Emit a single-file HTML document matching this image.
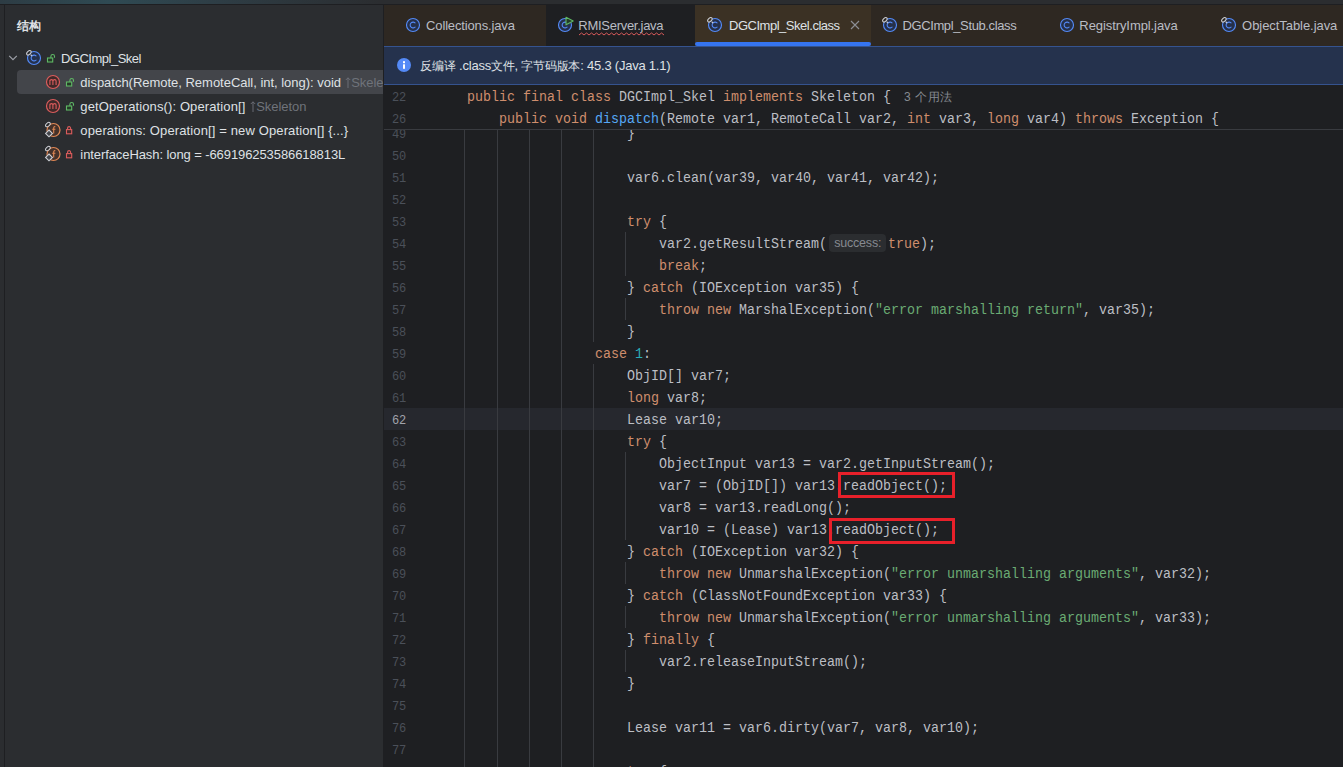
<!DOCTYPE html><html><head><meta charset="utf-8"><style>

*{margin:0;padding:0;box-sizing:border-box}
html,body{width:1343px;height:767px;overflow:hidden;background:#1e1f22}
body{position:relative;font-family:"Liberation Sans",sans-serif;}
.a{position:absolute}
.code{position:absolute;font-family:"Liberation Mono",monospace;font-size:13.3333px;white-space:pre;color:#bcbec4;line-height:22px;height:22px;transform:scaleY(1.15);transform-origin:0 14.56px}
.k{color:#cf8e6d} .s{color:#6aab73} .n{color:#2aacb8} .f{color:#56a8f5}
.ln{position:absolute;font-family:"Liberation Mono",monospace;font-size:12px;color:#4b5059;line-height:22px;height:22px;width:40px;text-align:right;left:366.3px;transform:scaleY(1.14);transform-origin:0 14.2px}
.g{position:absolute;width:1px;background:#393b40}
.ui{position:absolute;font-size:13px;color:#dfe1e5;white-space:nowrap;line-height:16px}
.gray{color:#6f737a}

</style></head><body>
<div class="a" style="left:0;top:0;width:1343px;height:4px;background:linear-gradient(to right,#2d3c44 0px,#2f4a53 110px,#2e3d45 220px,#2b2d30 380px,#2b2d30 1343px)"></div>
<div class="a" style="left:0;top:4px;width:1343px;height:1px;background:#1e1f22"></div>
<div class="a" style="left:0;top:5px;width:383px;height:762px;background:#2b2d30"></div>
<div class="a" style="left:4px;top:5px;width:1px;height:762px;background:#1e1f22"></div>
<div class="ui" id="title" style="left:17.20px;top:17.84px;letter-spacing:0.000px;font-size:12px;font-weight:bold;">结构</div>
<svg class="a" style="left:8px;top:54px" width="10" height="8" viewBox="0 0 10 8"><path d="M1.2 1.8 L5 5.6 L8.8 1.8" fill="none" stroke="#9da0a8" stroke-width="1.2"/></svg>
<svg class="a" style="left:25px;top:49px" width="18" height="18" viewBox="0 0 18 18"><circle cx="9" cy="9" r="6.5" fill="#25324d" stroke="#548af7" stroke-width="1.15"/><path d="M11.4 7.3 A2.9 2.9 0 1 0 11.4 10.7" fill="none" stroke="#548af7" stroke-width="1.1"/><ellipse cx="3.9" cy="3.8" rx="2.7" ry="1.6" transform="rotate(-45 3.9 3.8)" fill="#2b2d30" stroke="#ced0d6" stroke-width="1"/><path d="M5.6 5.6 L7.2 7.2" stroke="#ced0d6" stroke-width="1.1"/></svg>
<svg class="a" style="left:46px;top:53px" width="10" height="10" viewBox="0 0 10 10"><rect x="1.5" y="5" width="5.2" height="4" fill="#253a27" stroke="#5fb865" stroke-width="1.1"/><path d="M4.9 5 V3.3 A1.8 1.8 0 0 1 8.5 3.3 V4.8" fill="none" stroke="#5fb865" stroke-width="1.1"/></svg>
<div class="ui" id="t_cls" style="left:60.93px;top:50.50px;letter-spacing:-0.491px;font-size:13px;">DGCImpl_Skel</div>
<div class="a" style="left:17px;top:70px;width:366px;height:24px;background:#43454a;border-radius:4px 0 0 4px"></div>
<div class="a" style="left:0;top:0;width:383px;height:767px;overflow:hidden">
<svg class="a" style="left:44px;top:73px" width="18" height="18" viewBox="0 0 18 18"><circle cx="9" cy="9" r="6.5" fill="#402929" stroke="#db5c5c" stroke-width="1.2"/><path d="M5.9 12 V6.7 M5.9 8 Q6.2 6.6 7.5 6.6 Q8.9 6.6 8.9 8 V12 M8.9 8 Q9.3 6.6 10.6 6.6 Q12.1 6.6 12.1 8 V12" fill="none" stroke="#db5c5c" stroke-width="1.1"/></svg>
<svg class="a" style="left:65px;top:77px" width="10" height="10" viewBox="0 0 10 10"><rect x="1.5" y="5" width="5.2" height="4" fill="#253a27" stroke="#5fb865" stroke-width="1.1"/><path d="M4.9 5 V3.3 A1.8 1.8 0 0 1 8.5 3.3 V4.8" fill="none" stroke="#5fb865" stroke-width="1.1"/></svg>
<div class="ui" id="t_r1" style="left:80.35px;top:74.50px;letter-spacing:-0.020px;font-size:13px;">dispatch(Remote, RemoteCall, int, long): void</div>
<svg class="a" style="left:345px;top:77px" width="6" height="11" viewBox="0 0 6 11"><path d="M3 11 V0.8 M0.8 3 L3 0.8 L5.2 3" fill="none" stroke="#6f737a" stroke-width="0.9"/></svg>
<div class="ui" id="t_r1s" style="left:351.23px;top:74.50px;letter-spacing:-0.039px;font-size:13px;color:#6f737a;">Skeleton</div>
<svg class="a" style="left:44px;top:97px" width="18" height="18" viewBox="0 0 18 18"><circle cx="9" cy="9" r="6.5" fill="#402929" stroke="#db5c5c" stroke-width="1.2"/><path d="M5.9 12 V6.7 M5.9 8 Q6.2 6.6 7.5 6.6 Q8.9 6.6 8.9 8 V12 M8.9 8 Q9.3 6.6 10.6 6.6 Q12.1 6.6 12.1 8 V12" fill="none" stroke="#db5c5c" stroke-width="1.1"/></svg>
<svg class="a" style="left:65px;top:101px" width="10" height="10" viewBox="0 0 10 10"><rect x="1.5" y="5" width="5.2" height="4" fill="#253a27" stroke="#5fb865" stroke-width="1.1"/><path d="M4.9 5 V3.3 A1.8 1.8 0 0 1 8.5 3.3 V4.8" fill="none" stroke="#5fb865" stroke-width="1.1"/></svg>
<div class="ui" id="t_r2" style="left:80.35px;top:98.50px;letter-spacing:0.117px;font-size:13px;">getOperations(): Operation[]</div>
<svg class="a" style="left:250px;top:101px" width="6" height="11" viewBox="0 0 6 11"><path d="M3 11 V0.8 M0.8 3 L3 0.8 L5.2 3" fill="none" stroke="#6f737a" stroke-width="0.9"/></svg>
<div class="ui" id="t_r2s" style="left:256.23px;top:98.50px;letter-spacing:-0.039px;font-size:13px;color:#6f737a;">Skeleton</div>
<svg class="a" style="left:44px;top:121px" width="18" height="18" viewBox="0 0 18 18"><circle cx="9.5" cy="9" r="6.5" fill="#45322a" stroke="#e08855" stroke-width="1.2"/><path d="M11.3 5.7 Q9.7 5.3 9.7 7 V12.6 M8.2 8.3 H11.4" fill="none" stroke="#e08855" stroke-width="1.1"/><ellipse cx="3.9" cy="3.6" rx="2.7" ry="1.6" transform="rotate(-40 3.9 3.6)" fill="#2b2d30" stroke="#ced0d6" stroke-width="1"/><path d="M5 9 L8.4 12.4 L5 15.8 L1.6 12.4 Z" fill="#43454a" stroke="#ced0d6" stroke-width="1.1"/></svg>
<svg class="a" style="left:65px;top:125px" width="10" height="10" viewBox="0 0 10 10"><rect x="1.5" y="4.6" width="5.2" height="4.2" fill="#3d2a2a" stroke="#db5c5c" stroke-width="1.1"/><path d="M2.6 4.6 V3.1 A1.5 1.5 0 0 1 5.6 3.1 V4.6" fill="none" stroke="#db5c5c" stroke-width="1.1"/></svg>
<div class="ui" id="t_r3" style="left:80.35px;top:122.50px;letter-spacing:0.127px;font-size:13px;">operations: Operation[] = new Operation[] {...}</div>
<svg class="a" style="left:44px;top:145px" width="18" height="18" viewBox="0 0 18 18"><circle cx="9.5" cy="9" r="6.5" fill="#45322a" stroke="#e08855" stroke-width="1.2"/><path d="M11.3 5.7 Q9.7 5.3 9.7 7 V12.6 M8.2 8.3 H11.4" fill="none" stroke="#e08855" stroke-width="1.1"/><ellipse cx="3.9" cy="3.6" rx="2.7" ry="1.6" transform="rotate(-40 3.9 3.6)" fill="#2b2d30" stroke="#ced0d6" stroke-width="1"/><path d="M5 9 L8.4 12.4 L5 15.8 L1.6 12.4 Z" fill="#43454a" stroke="#ced0d6" stroke-width="1.1"/></svg>
<svg class="a" style="left:65px;top:149px" width="10" height="10" viewBox="0 0 10 10"><rect x="1.5" y="4.6" width="5.2" height="4.2" fill="#3d2a2a" stroke="#db5c5c" stroke-width="1.1"/><path d="M2.6 4.6 V3.1 A1.5 1.5 0 0 1 5.6 3.1 V4.6" fill="none" stroke="#db5c5c" stroke-width="1.1"/></svg>
<div class="ui" id="t_r4" style="left:80.35px;top:146.50px;letter-spacing:-0.088px;font-size:13px;">interfaceHash: long = -669196253586618813L</div>
</div>
<div class="a" style="left:383px;top:5px;width:1px;height:762px;background:#1e1f22"></div>
<div class="a" style="left:384px;top:5px;width:162px;height:41px;background:#2e2822"></div>
<div class="a" style="left:546px;top:5px;width:149px;height:41px;background:#1e1f22"></div>
<div class="a" style="left:695px;top:5px;width:176px;height:41px;background:#3b3124"></div>
<div class="a" style="left:871px;top:5px;width:175px;height:41px;background:#2e2822"></div>
<div class="a" style="left:1046px;top:5px;width:162px;height:41px;background:#2e2822"></div>
<div class="a" style="left:1208px;top:5px;width:135px;height:41px;background:#2e2822"></div>
<svg class="a" style="left:404px;top:16px" width="18" height="18" viewBox="0 0 18 18"><circle cx="9" cy="9" r="6.5" fill="#25304a" stroke="#548af7" stroke-width="1.15"/><path d="M11.4 7.3 A2.9 2.9 0 1 0 11.4 10.7" fill="none" stroke="#548af7" stroke-width="1.1"/></svg>
<div class="ui" id="tab1" style="left:426.09px;top:17.50px;letter-spacing:-0.150px;font-size:13px;color:#babdc4;">Collections.java</div>
<svg class="a" style="left:556px;top:16px" width="18" height="18" viewBox="0 0 18 18"><circle cx="9" cy="9" r="6.5" fill="#25304a" stroke="#548af7" stroke-width="1.15"/><path d="M11.4 7.3 A2.9 2.9 0 1 0 11.4 10.7" fill="none" stroke="#548af7" stroke-width="1.1"/></svg>
<div class="ui" id="tab2" style="left:578.30px;top:17.50px;letter-spacing:-0.277px;font-size:13px;color:#babdc4;">RMIServer.java</div>
<svg class="a" style="left:564px;top:15px" width="12" height="12" viewBox="0 0 12 12"><path d="M2 2.2 L9.2 6 L2 9.8 Z" fill="#253a27" stroke="#5fb865" stroke-width="1.1" stroke-linejoin="round"/></svg>
<svg class="a" style="left:0;top:0" width="700" height="40"><polyline points="579.0,35 581.5,33 584.0,35 586.5,33 589.0,35 591.5,33 594.0,35 596.5,33 599.0,35 601.5,33 604.0,35 606.5,33 609.0,35 611.5,33 614.0,35 616.5,33 619.0,35 621.5,33 624.0,35 626.5,33 629.0,35 631.5,33 634.0,35 636.5,33 639.0,35 641.5,33 644.0,35 646.5,33 649.0,35 651.5,33 654.0,35 656.5,33 659.0,35 661.5,33 664.0,35" fill="none" stroke="#d95a5a" stroke-width="1"/></svg>
<svg class="a" style="left:706px;top:16px" width="18" height="18" viewBox="0 0 18 18"><circle cx="9" cy="9" r="6.5" fill="#25304a" stroke="#548af7" stroke-width="1.15"/><path d="M11.4 7.3 A2.9 2.9 0 1 0 11.4 10.7" fill="none" stroke="#548af7" stroke-width="1.1"/><ellipse cx="3.9" cy="3.8" rx="2.7" ry="1.6" transform="rotate(-45 3.9 3.8)" fill="#3b3124" stroke="#ced0d6" stroke-width="1"/><path d="M5.6 5.6 L7.2 7.2" stroke="#ced0d6" stroke-width="1.1"/></svg>
<div class="ui" id="tab3" style="left:729.00px;top:17.50px;letter-spacing:-0.476px;font-size:13px;color:#dfe1e5;">DGCImpl_Skel.class</div>
<div class="a" style="left:695px;top:42px;width:176px;height:4px;background:#3574f0;border-radius:2px"></div>
<svg class="a" style="left:849px;top:19px" width="12" height="12" viewBox="0 0 12 12"><path d="M2 2 L10 10 M10 2 L2 10" stroke="#8c8f96" stroke-width="1.1"/></svg>
<svg class="a" style="left:880.5px;top:16px" width="18" height="18" viewBox="0 0 18 18"><circle cx="9" cy="9" r="6.5" fill="#25304a" stroke="#548af7" stroke-width="1.15"/><path d="M11.4 7.3 A2.9 2.9 0 1 0 11.4 10.7" fill="none" stroke="#548af7" stroke-width="1.1"/><ellipse cx="3.9" cy="3.8" rx="2.7" ry="1.6" transform="rotate(-45 3.9 3.8)" fill="#2e2822" stroke="#ced0d6" stroke-width="1"/><path d="M5.6 5.6 L7.2 7.2" stroke="#ced0d6" stroke-width="1.1"/></svg>
<div class="ui" id="tab4" style="left:902.39px;top:17.50px;letter-spacing:-0.371px;font-size:13px;color:#babdc4;">DGCImpl_Stub.class</div>
<svg class="a" style="left:1058px;top:16px" width="18" height="18" viewBox="0 0 18 18"><circle cx="9" cy="9" r="6.5" fill="#25304a" stroke="#548af7" stroke-width="1.15"/><path d="M11.4 7.3 A2.9 2.9 0 1 0 11.4 10.7" fill="none" stroke="#548af7" stroke-width="1.1"/></svg>
<div class="ui" id="tab5" style="left:1079.36px;top:17.50px;letter-spacing:-0.084px;font-size:13px;color:#babdc4;">RegistryImpl.java</div>
<svg class="a" style="left:1220px;top:16px" width="18" height="18" viewBox="0 0 18 18"><circle cx="9" cy="9" r="6.5" fill="#25304a" stroke="#548af7" stroke-width="1.15"/><path d="M11.4 7.3 A2.9 2.9 0 1 0 11.4 10.7" fill="none" stroke="#548af7" stroke-width="1.1"/><ellipse cx="3.9" cy="3.8" rx="2.7" ry="1.6" transform="rotate(-45 3.9 3.8)" fill="#2e2822" stroke="#ced0d6" stroke-width="1"/><path d="M5.6 5.6 L7.2 7.2" stroke="#ced0d6" stroke-width="1.1"/></svg>
<div class="ui" id="tab6" style="left:1242.12px;top:17.50px;letter-spacing:-0.060px;font-size:13px;color:#babdc4;">ObjectTable.java</div>
<div class="a" style="left:384px;top:46px;width:959px;height:39px;background:#25324d;border-top:1px solid #35538f;border-bottom:1px solid #35538f"></div>
<svg class="a" style="left:396px;top:57px" width="16" height="16" viewBox="0 0 16 16"><circle cx="8" cy="8" r="7" fill="#548af7"/><rect x="7" y="7.3" width="2" height="4.5" fill="#ffffff"/><rect x="7" y="4.2" width="2" height="2" fill="#ffffff"/></svg>
<div class="ui" id="banner" style="left:420.42px;top:57.50px;letter-spacing:-0.226px;font-size:13px;"><span style="font-size:12.2px">反编译</span> .class<span style="font-size:12.2px">文件</span>, <span style="font-size:12.2px">字节码版本</span>: 45.3 (Java 1.1)</div>
<div class="a" style="left:384px;top:408px;width:959px;height:22px;background:#26282e"></div>
<div class="g" style="left:464px;top:130px;height:637px"></div>
<div class="g" style="left:497px;top:130px;height:637px"></div>
<div class="g" style="left:529px;top:130px;height:637px"></div>
<div class="g" style="left:561px;top:130px;height:637px"></div>
<div class="g" style="left:593px;top:130px;height:212px"></div>
<div class="g" style="left:593px;top:364px;height:403px"></div>
<div class="g" style="left:625px;top:232px;height:44px"></div>
<div class="g" style="left:625px;top:298px;height:22px"></div>
<div class="g" style="left:625px;top:452px;height:88px"></div>
<div class="g" style="left:625px;top:562px;height:22px"></div>
<div class="g" style="left:625px;top:606px;height:22px"></div>
<div class="g" style="left:625px;top:650px;height:22px"></div>
<div class="ln" style="top:123.8px;color:#4b5059">49</div>
<div class="code" style="left:627.0px;top:123.5px">}</div>
<div class="ln" style="top:145.8px;color:#4b5059">50</div>
<div class="ln" style="top:167.8px;color:#4b5059">51</div>
<div class="code" style="left:627.0px;top:167.5px">var6.clean(var39, var40, var41, var42);</div>
<div class="ln" style="top:189.8px;color:#4b5059">52</div>
<div class="ln" style="top:211.8px;color:#4b5059">53</div>
<div class="code" style="left:627.0px;top:211.5px"><span class="k">try</span> {</div>
<div class="ln" style="top:233.8px;color:#4b5059">54</div>
<div class="code" style="left:659.0px;top:233.5px">var2.getResultStream(</div>
<div class="code" style="left:888.0px;top:233.5px"><span class="k">true</span>);</div>
<div class="ln" style="top:255.8px;color:#4b5059">55</div>
<div class="code" style="left:659.0px;top:255.5px"><span class="k">break</span>;</div>
<div class="ln" style="top:277.8px;color:#4b5059">56</div>
<div class="code" style="left:627.0px;top:277.5px">} <span class="k">catch</span> (IOException var35) {</div>
<div class="ln" style="top:299.8px;color:#4b5059">57</div>
<div class="code" style="left:659.0px;top:299.5px"><span class="k">throw</span> <span class="k">new</span> MarshalException(<span class="s">&quot;error marshalling return&quot;</span>, var35);</div>
<div class="ln" style="top:321.8px;color:#4b5059">58</div>
<div class="code" style="left:627.0px;top:321.5px">}</div>
<div class="ln" style="top:343.8px;color:#4b5059">59</div>
<div class="code" style="left:595.0px;top:343.5px"><span class="k">case</span> <span class="n">1</span>:</div>
<div class="ln" style="top:365.8px;color:#4b5059">60</div>
<div class="code" style="left:627.0px;top:365.5px">ObjID[] var7;</div>
<div class="ln" style="top:387.8px;color:#4b5059">61</div>
<div class="code" style="left:627.0px;top:387.5px"><span class="k">long</span> var8;</div>
<div class="ln" style="top:409.8px;color:#a1a3ab">62</div>
<div class="code" style="left:627.0px;top:409.5px">Lease var10;</div>
<div class="ln" style="top:431.8px;color:#4b5059">63</div>
<div class="code" style="left:627.0px;top:431.5px"><span class="k">try</span> {</div>
<div class="ln" style="top:453.8px;color:#4b5059">64</div>
<div class="code" style="left:659.0px;top:453.5px">ObjectInput var13 = var2.getInputStream();</div>
<div class="ln" style="top:475.8px;color:#4b5059">65</div>
<div class="code" style="left:659.0px;top:475.5px">var7 = (ObjID[]) var13.readObject();</div>
<div class="ln" style="top:497.8px;color:#4b5059">66</div>
<div class="code" style="left:659.0px;top:497.5px">var8 = var13.readLong();</div>
<div class="ln" style="top:519.8px;color:#4b5059">67</div>
<div class="code" style="left:659.0px;top:519.5px">var10 = (Lease) var13.readObject();</div>
<div class="ln" style="top:541.8px;color:#4b5059">68</div>
<div class="code" style="left:627.0px;top:541.5px">} <span class="k">catch</span> (IOException var32) {</div>
<div class="ln" style="top:563.8px;color:#4b5059">69</div>
<div class="code" style="left:659.0px;top:563.5px"><span class="k">throw</span> <span class="k">new</span> UnmarshalException(<span class="s">&quot;error unmarshalling arguments&quot;</span>, var32);</div>
<div class="ln" style="top:585.8px;color:#4b5059">70</div>
<div class="code" style="left:627.0px;top:585.5px">} <span class="k">catch</span> (ClassNotFoundException var33) {</div>
<div class="ln" style="top:607.8px;color:#4b5059">71</div>
<div class="code" style="left:659.0px;top:607.5px"><span class="k">throw</span> <span class="k">new</span> UnmarshalException(<span class="s">&quot;error unmarshalling arguments&quot;</span>, var33);</div>
<div class="ln" style="top:629.8px;color:#4b5059">72</div>
<div class="code" style="left:627.0px;top:629.5px">} <span class="k">finally</span> {</div>
<div class="ln" style="top:651.8px;color:#4b5059">73</div>
<div class="code" style="left:659.0px;top:651.5px">var2.releaseInputStream();</div>
<div class="ln" style="top:673.8px;color:#4b5059">74</div>
<div class="code" style="left:627.0px;top:673.5px">}</div>
<div class="ln" style="top:695.8px;color:#4b5059">75</div>
<div class="ln" style="top:717.8px;color:#4b5059">76</div>
<div class="code" style="left:627.0px;top:717.5px">Lease var11 = var6.dirty(var7, var8, var10);</div>
<div class="ln" style="top:739.8px;color:#4b5059">77</div>
<div class="ln" style="top:761.8px;color:#4b5059">78</div>
<div class="code" style="left:627.0px;top:761.5px"><span class="k">try</span> {</div>
<div class="a" style="left:829px;top:234px;width:57px;height:18px;background:#2b2d30;border-radius:4px"></div>
<div class="ui" id="hint" style="left:834.15px;top:234.77px;letter-spacing:-0.193px;font-size:12.5px;color:#868a91;">success:</div>
<div class="a" style="left:384px;top:85px;width:959px;height:44px;background:#1e1f22"></div>
<div class="a" style="left:384px;top:129px;width:959px;height:1px;background:#393b40"></div>
<div class="ln" style="top:86.8px">22</div>
<div class="ln" style="top:108.8px">26</div>
<div class="code" style="left:467.0px;top:86.5px"><span class="k">public</span> <span class="k">final</span> <span class="k">class</span> DGCImpl_Skel <span class="k">implements</span> Skeleton {</div>
<div class="ui" id="usages" style="left:904.01px;top:88.84px;letter-spacing:0.562px;font-size:12px;color:#868a91;">3 个用法</div>
<div class="code" style="left:499.0px;top:108.5px"><span class="k">public</span> <span class="k">void</span> <span class="f">dispatch</span>(Remote var1, RemoteCall var2, <span class="k">int</span> var3, <span class="k">long</span> var4) <span class="k">throws</span> Exception {</div>
<div class="a" style="left:838px;top:472px;width:117px;height:26px;border:3px solid #e8202a"></div>
<div class="a" style="left:829px;top:518px;width:126px;height:26px;border:3px solid #e8202a"></div>
</body></html>
